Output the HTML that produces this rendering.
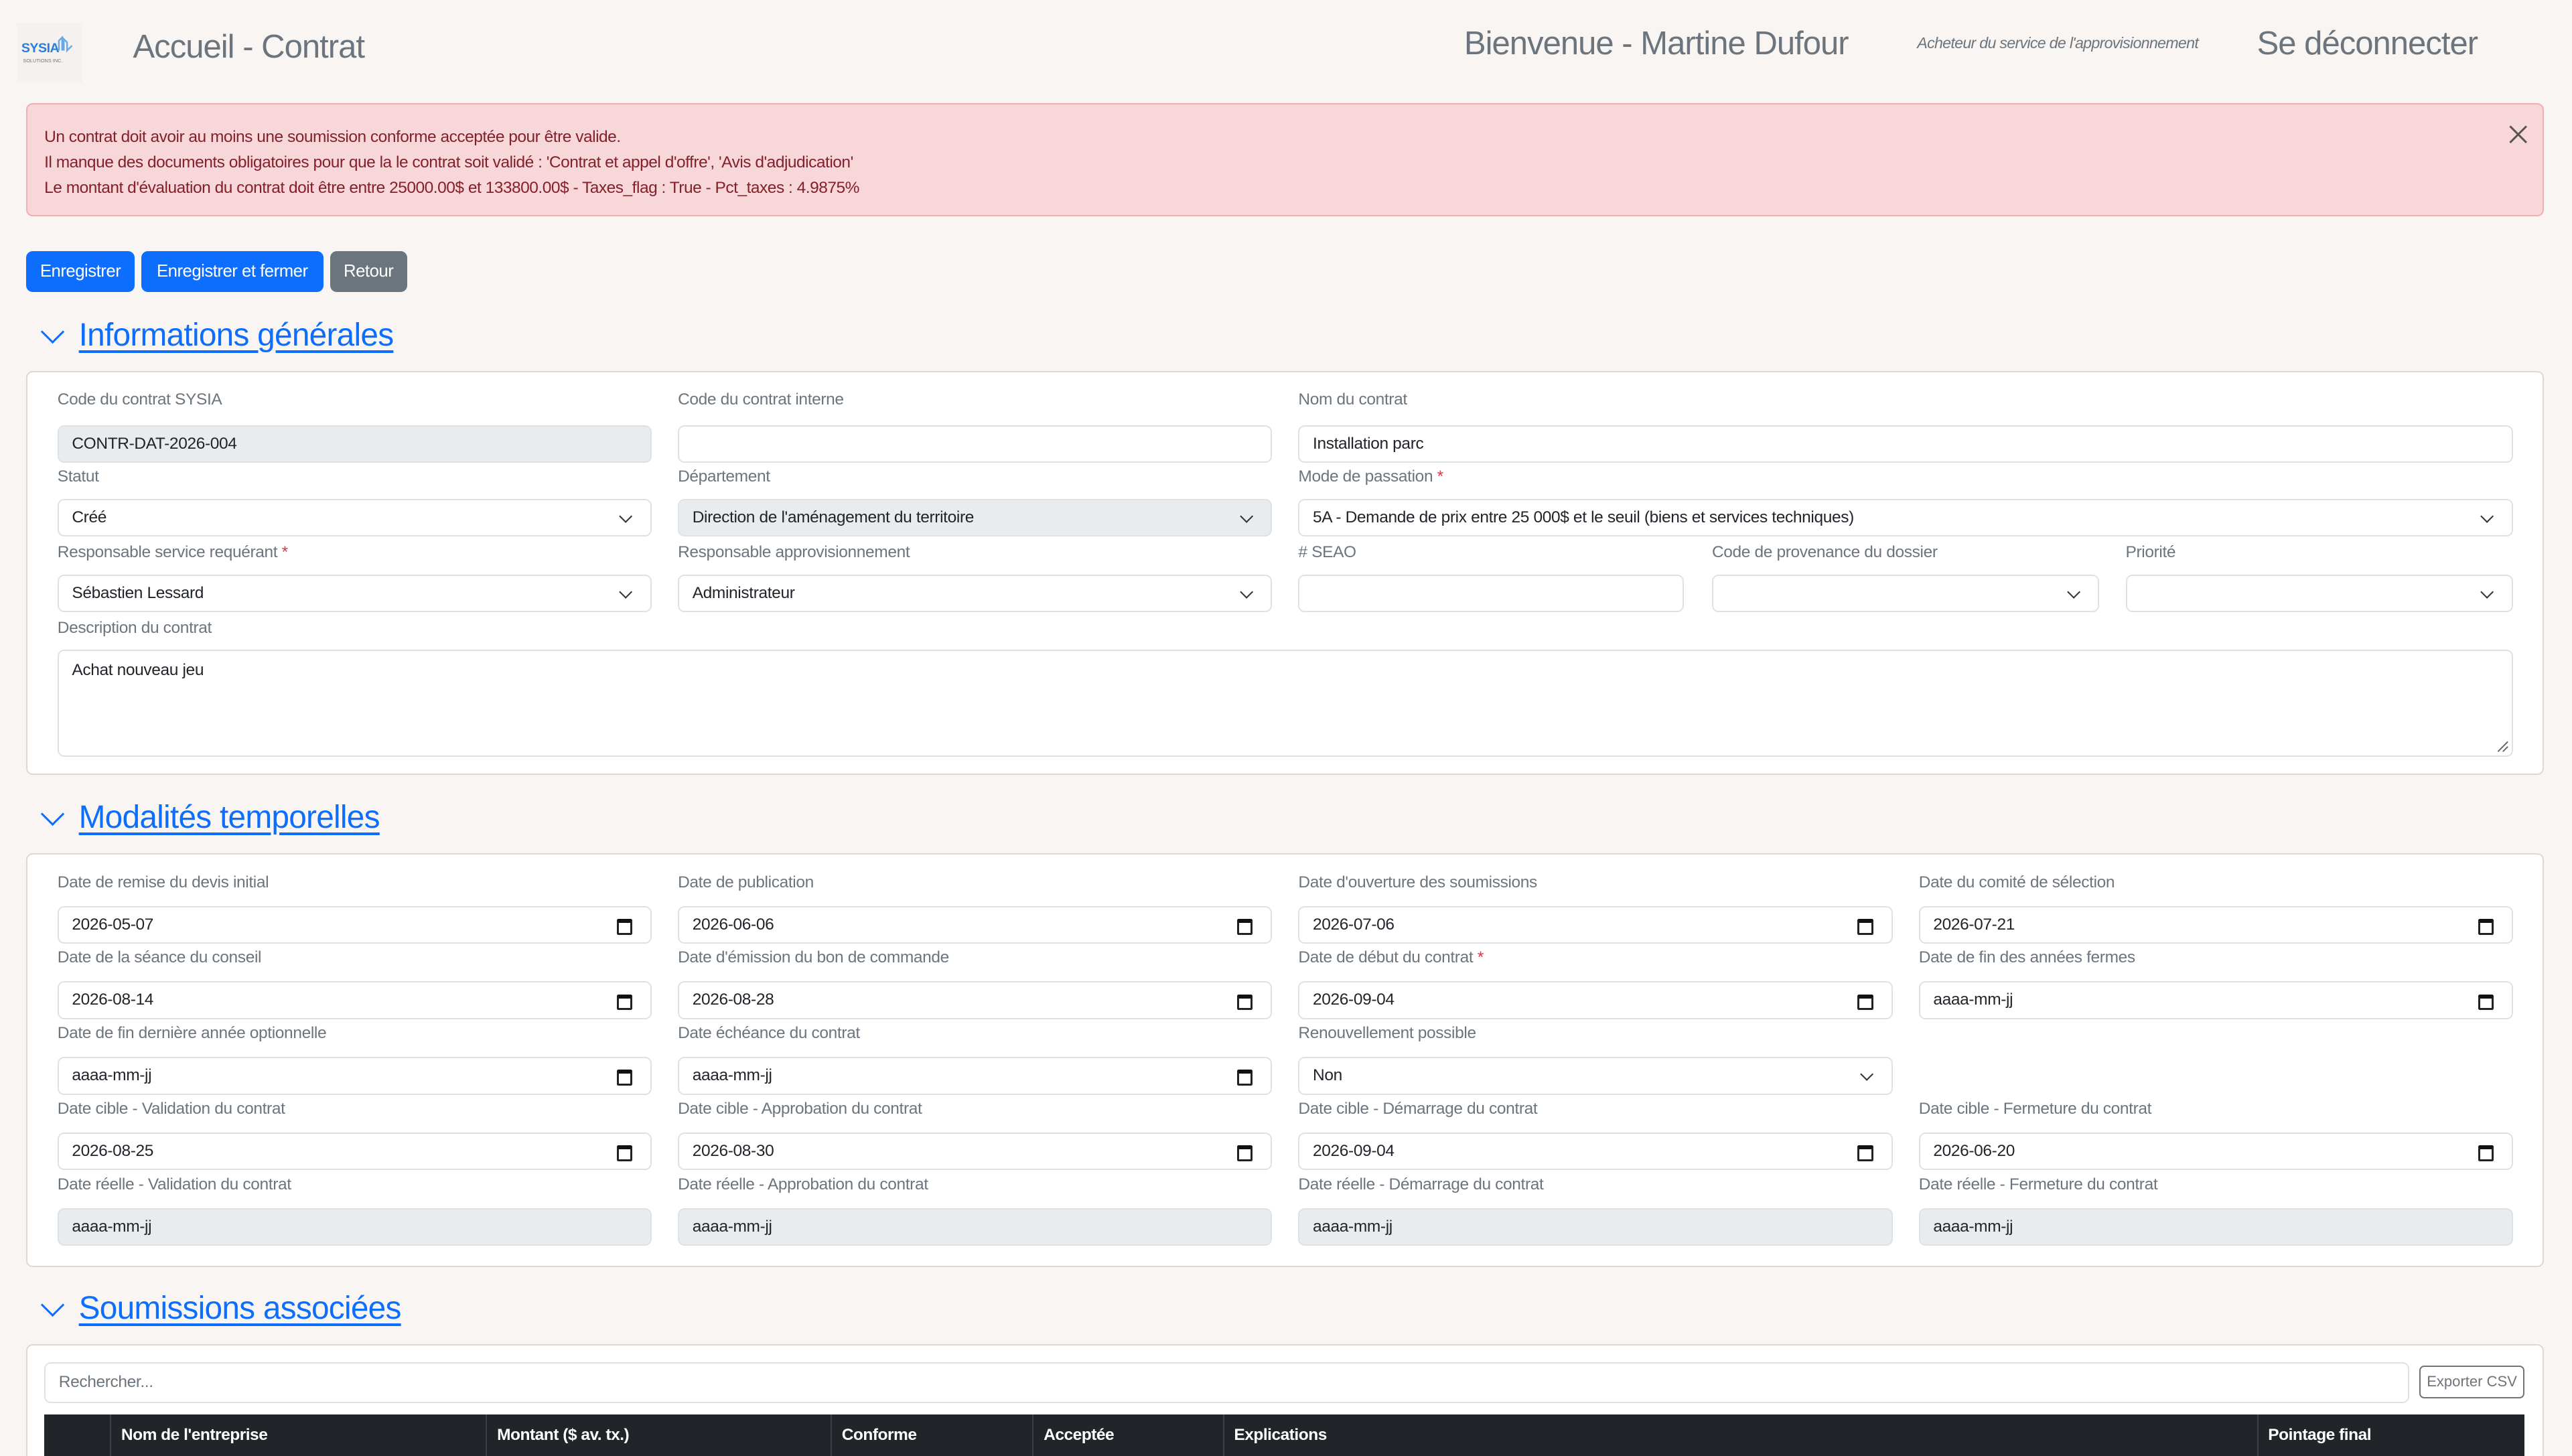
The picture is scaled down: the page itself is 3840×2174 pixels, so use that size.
<!DOCTYPE html>
<html><head><meta charset="utf-8">
<style>
html,body{margin:0;padding:0;background:#f8f5f2;overflow:hidden}
#w{position:relative;width:1567px;height:887px;zoom:2.4506;font-family:"Liberation Sans",sans-serif;color:#212529;font-size:10px}
.a{position:absolute;white-space:nowrap}
.l{position:absolute;color:#6c757d;font-size:10px;white-space:nowrap;letter-spacing:-0.15px}
.l b{color:#dc3545;font-weight:normal}
.f{position:absolute;height:23px;box-sizing:border-box;border:1px solid #dee2e6;border-radius:4px;background:#fff;font-size:10px;line-height:21px;padding-left:8px;white-space:nowrap;color:#212529;letter-spacing:-0.15px}
.d{background:#e9ecef}
.s::after{content:"";position:absolute;right:12px;top:7px;width:5px;height:5px;border-right:1.2px solid #333;border-bottom:1.2px solid #333;transform:rotate(45deg)}
.c::after{content:"";position:absolute;right:11px;top:7px;width:7px;height:6px;border:1.3px solid #222;border-top:2.5px solid #111;border-radius:1px}
.box{position:absolute;left:16px;width:1534px;background:#fff;border:1px solid #d9d9d9;border-radius:4px;box-sizing:border-box}
.h{position:absolute;left:48px;font-size:19.5px;color:#0d6efd;white-space:nowrap;letter-spacing:-0.3px;text-decoration:underline;text-decoration-thickness:1.5px;text-underline-offset:3px}
.ch{position:absolute;left:27px;width:9px;height:9px;border-right:1.5px solid #0d6efd;border-bottom:1.5px solid #0d6efd;transform:rotate(45deg)}
.btn{position:absolute;top:153px;height:25px;border-radius:4px;color:#fff;font-size:10.5px;line-height:25px;text-align:center;background:#0d6efd;letter-spacing:-0.2px}
.th{position:absolute;top:862px;height:25px;line-height:25px;color:#fff;font-weight:bold;font-size:10px;padding-left:6px;box-sizing:border-box;border-left:1px solid #3b4046;letter-spacing:-0.2px}
.hd{font-size:20px;color:#6c757d;letter-spacing:-0.4px;top:15px}
</style></head><body>
<div id="w">
<div class="a" style="left:10px;top:14px;width:40px;height:36px;background:#f4f1ee"></div>
<div class="a" style="left:13px;top:25px;font-size:8px;font-weight:bold;color:#2a7de1;letter-spacing:-0.2px">SYSIA</div>
<svg class="a" style="left:34px;top:21px" width="12" height="12" viewBox="0 0 12 12"><path d="M2 10V4l2-2v8M5 10V3l2 2v5l3-3" fill="none" stroke="#6aa9e6" stroke-width="1"/></svg>
<div class="a" style="left:14px;top:35px;font-size:3px;color:#777">SOLUTIONS INC.</div>
<div class="a hd" style="left:81px;top:17px">Accueil - Contrat</div>
<div class="a hd" style="left:892px">Bienvenue - Martine Dufour</div>
<div class="a" style="left:1168px;top:21px;font-size:9.5px;font-style:italic;color:#6c757d;letter-spacing:-0.3px">Acheteur du service de l'approvisionnement</div>
<div class="a hd" style="left:1375px">Se déconnecter</div>
<div class="a" style="left:16px;top:63px;width:1534px;height:69px;box-sizing:border-box;background:#f8d7da;border:1px solid #f1aeb5;border-radius:4px"></div>
<div class="a" style="left:27px;top:76px;font-size:10px;line-height:15.5px;color:#842029;letter-spacing:-0.2px">Un contrat doit avoir au moins une soumission conforme acceptée pour être valide.<br>Il manque des documents obligatoires pour que la le contrat soit validé : 'Contrat et appel d'offre', 'Avis d'adjudication'<br>Le montant d'évaluation du contrat doit être entre 25000.00$ et 133800.00$ - Taxes_flag : True - Pct_taxes : 4.9875%</div>
<svg class="a" style="left:1528px;top:76px" width="12" height="12" viewBox="0 0 12 12"><path d="M1 1L11 11M11 1L1 11" stroke="#555" stroke-width="1.2"/></svg>
<div class="btn" style="left:16px;width:66px">Enregistrer</div>
<div class="btn" style="left:86px;width:111px">Enregistrer et fermer</div>
<div class="btn" style="left:201px;width:47px;background:#6c757d">Retour</div>

<div class="ch" style="top:197px"></div>
<div class="h" style="top:193px">Informations générales</div>
<div class="box" style="top:226px;height:246px"></div>
<div class="l" style="left:35px;top:238px">Code du contrat SYSIA</div>
<div class="l" style="left:413px;top:238px">Code du contrat interne</div>
<div class="l" style="left:791px;top:238px">Nom du contrat</div>
<div class="f d" style="left:35px;top:259px;width:362px">CONTR-DAT-2026-004</div>
<div class="f" style="left:413px;top:259px;width:362px"></div>
<div class="f" style="left:791px;top:259px;width:740px">Installation parc</div>
<div class="l" style="left:35px;top:285px">Statut</div>
<div class="l" style="left:413px;top:285px">Département</div>
<div class="l" style="left:791px;top:285px">Mode de passation <b>*</b></div>
<div class="f s" style="left:35px;top:304px;width:362px">Créé</div>
<div class="f s d" style="left:413px;top:304px;width:362px">Direction de l'aménagement du territoire</div>
<div class="f s" style="left:791px;top:304px;width:740px">5A - Demande de prix entre 25 000$ et le seuil (biens et services techniques)</div>
<div class="l" style="left:35px;top:331px">Responsable service requérant <b>*</b></div>
<div class="l" style="left:413px;top:331px">Responsable approvisionnement</div>
<div class="l" style="left:791px;top:331px"># SEAO</div>
<div class="l" style="left:1043px;top:331px">Code de provenance du dossier</div>
<div class="l" style="left:1295px;top:331px">Priorité</div>
<div class="f s" style="left:35px;top:350px;width:362px">Sébastien Lessard</div>
<div class="f s" style="left:413px;top:350px;width:362px">Administrateur</div>
<div class="f" style="left:791px;top:350px;width:235px"></div>
<div class="f s" style="left:1043px;top:350px;width:236px"></div>
<div class="f s" style="left:1295px;top:350px;width:236px"></div>
<div class="l" style="left:35px;top:377px">Description du contrat</div>
<div class="f" style="left:35px;top:396px;width:1496px;height:65px;line-height:24px">Achat nouveau jeu</div>
<svg class="a" style="left:1521px;top:451px" width="8" height="8" viewBox="0 0 8 8"><path d="M7 1L1 7M7 4L4 7" stroke="#666" stroke-width="0.8"/></svg>

<div class="ch" style="top:491px"></div>
<div class="h" style="top:487px">Modalités temporelles</div>
<div class="box" style="top:520px;height:252px"></div>
<div class="l" style="left:35px;top:532px">Date de remise du devis initial</div>
<div class="l" style="left:413px;top:532px">Date de publication</div>
<div class="l" style="left:791px;top:532px">Date d'ouverture des soumissions</div>
<div class="l" style="left:1169px;top:532px">Date du comité de sélection</div>
<div class="f c" style="left:35px;top:552px;width:362px">2026-05-07</div>
<div class="f c" style="left:413px;top:552px;width:362px">2026-06-06</div>
<div class="f c" style="left:791px;top:552px;width:362px">2026-07-06</div>
<div class="f c" style="left:1169px;top:552px;width:362px">2026-07-21</div>
<div class="l" style="left:35px;top:578px">Date de la séance du conseil</div>
<div class="l" style="left:413px;top:578px">Date d'émission du bon de commande</div>
<div class="l" style="left:791px;top:578px">Date de début du contrat <b>*</b></div>
<div class="l" style="left:1169px;top:578px">Date de fin des années fermes</div>
<div class="f c" style="left:35px;top:598px;width:362px">2026-08-14</div>
<div class="f c" style="left:413px;top:598px;width:362px">2026-08-28</div>
<div class="f c" style="left:791px;top:598px;width:362px">2026-09-04</div>
<div class="f c" style="left:1169px;top:598px;width:362px">aaaa-mm-jj</div>
<div class="l" style="left:35px;top:624px">Date de fin dernière année optionnelle</div>
<div class="l" style="left:413px;top:624px">Date échéance du contrat</div>
<div class="l" style="left:791px;top:624px">Renouvellement possible</div>
<div class="f c" style="left:35px;top:644px;width:362px">aaaa-mm-jj</div>
<div class="f c" style="left:413px;top:644px;width:362px">aaaa-mm-jj</div>
<div class="f s" style="left:791px;top:644px;width:362px">Non</div>
<div class="l" style="left:35px;top:670px">Date cible - Validation du contrat</div>
<div class="l" style="left:413px;top:670px">Date cible - Approbation du contrat</div>
<div class="l" style="left:791px;top:670px">Date cible - Démarrage du contrat</div>
<div class="l" style="left:1169px;top:670px">Date cible - Fermeture du contrat</div>
<div class="f c" style="left:35px;top:690px;width:362px">2026-08-25</div>
<div class="f c" style="left:413px;top:690px;width:362px">2026-08-30</div>
<div class="f c" style="left:791px;top:690px;width:362px">2026-09-04</div>
<div class="f c" style="left:1169px;top:690px;width:362px">2026-06-20</div>
<div class="l" style="left:35px;top:716px">Date réelle - Validation du contrat</div>
<div class="l" style="left:413px;top:716px">Date réelle - Approbation du contrat</div>
<div class="l" style="left:791px;top:716px">Date réelle - Démarrage du contrat</div>
<div class="l" style="left:1169px;top:716px">Date réelle - Fermeture du contrat</div>
<div class="f d" style="left:35px;top:736px;width:362px">aaaa-mm-jj</div>
<div class="f d" style="left:413px;top:736px;width:362px">aaaa-mm-jj</div>
<div class="f d" style="left:791px;top:736px;width:362px">aaaa-mm-jj</div>
<div class="f d" style="left:1169px;top:736px;width:362px">aaaa-mm-jj</div>

<div class="ch" style="top:790px"></div>
<div class="h" style="top:786px">Soumissions associées</div>
<div class="box" style="top:819px;height:80px"></div>
<div class="f" style="left:27px;top:830px;width:1441px;height:25px;line-height:23px;color:#6c757d">Rechercher...</div>
<div class="a" style="left:1474px;top:832px;width:64px;height:20px;box-sizing:border-box;border:1px solid #6c757d;border-radius:3px;font-size:9px;line-height:18px;text-align:center;color:#6c757d;background:#fff">Exporter CSV</div>
<div class="a" style="left:27px;top:862px;width:1511px;height:25px;background:#212529"></div>
<div class="th" style="left:67px;width:229px">Nom de l'entreprise</div>
<div class="th" style="left:296px;width:210px">Montant ($ av. tx.)</div>
<div class="th" style="left:506px;width:123px">Conforme</div>
<div class="th" style="left:629px;width:116px">Acceptée</div>
<div class="th" style="left:745px;width:630px">Explications</div>
<div class="th" style="left:1375px;width:163px">Pointage final</div>
</div>
</body></html>
